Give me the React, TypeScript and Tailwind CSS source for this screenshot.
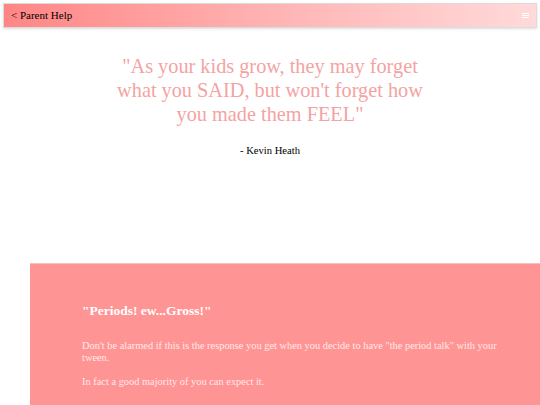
import React from 'react';

const serif = { fontFamily: '"Liberation Serif", "Times New Roman", serif' };

const Header: React.FC = () => (
  <header className="mx-[3px] mt-[3px] flex h-[25px] items-center justify-between border border-[#dcdcdc] bg-gradient-to-r from-[#ff8585] via-[#ffb3b3] to-[#ffdada] px-[7px] shadow-sm">
    <span className="text-[11px] text-black">&lt; Parent Help</span>
    <span className="flex w-[7px] flex-col gap-[1px]">
      <span className="h-[1px] w-full bg-white" />
      <span className="h-[1px] w-full bg-white" />
      <span className="h-[1px] w-full bg-white" />
    </span>
  </header>
);

const App: React.FC = () => {
  return (
    <div className="min-h-[405px] bg-white" style={serif}>
      <Header />

      <section className="flex flex-col items-center pt-[26px] text-center">
        <p className="w-[312px] text-[20.3px] leading-[24px] text-[#f4a3a3]">
          "As your kids grow, they may forget what you SAID, but won't forget how you made them FEEL"
        </p>
        <p className="mt-[17px] text-[10.6px] text-black">- Kevin Heath</p>
      </section>

      <section className="ml-[30px] mt-[104px] h-[142px] border-t border-[#f5c0c0] bg-[#ff9494] pl-[52px] pr-[24px] pt-[37px] text-white">
        <h2 className="text-[13.5px] font-bold">"Periods! ew...Gross!"</h2>
        <p className="mt-[19px] text-[10.4px] leading-[12px] text-[#ffe9e9]">
          Don't be alarmed if this is the response you get when you decide to have "the period talk" with your tween.
        </p>
        <p className="mt-[12px] text-[10.4px] leading-[12px] text-[#ffe9e9]">
          In fact a good majority of you can expect it.
        </p>
      </section>
    </div>
  );
};

export default App;
